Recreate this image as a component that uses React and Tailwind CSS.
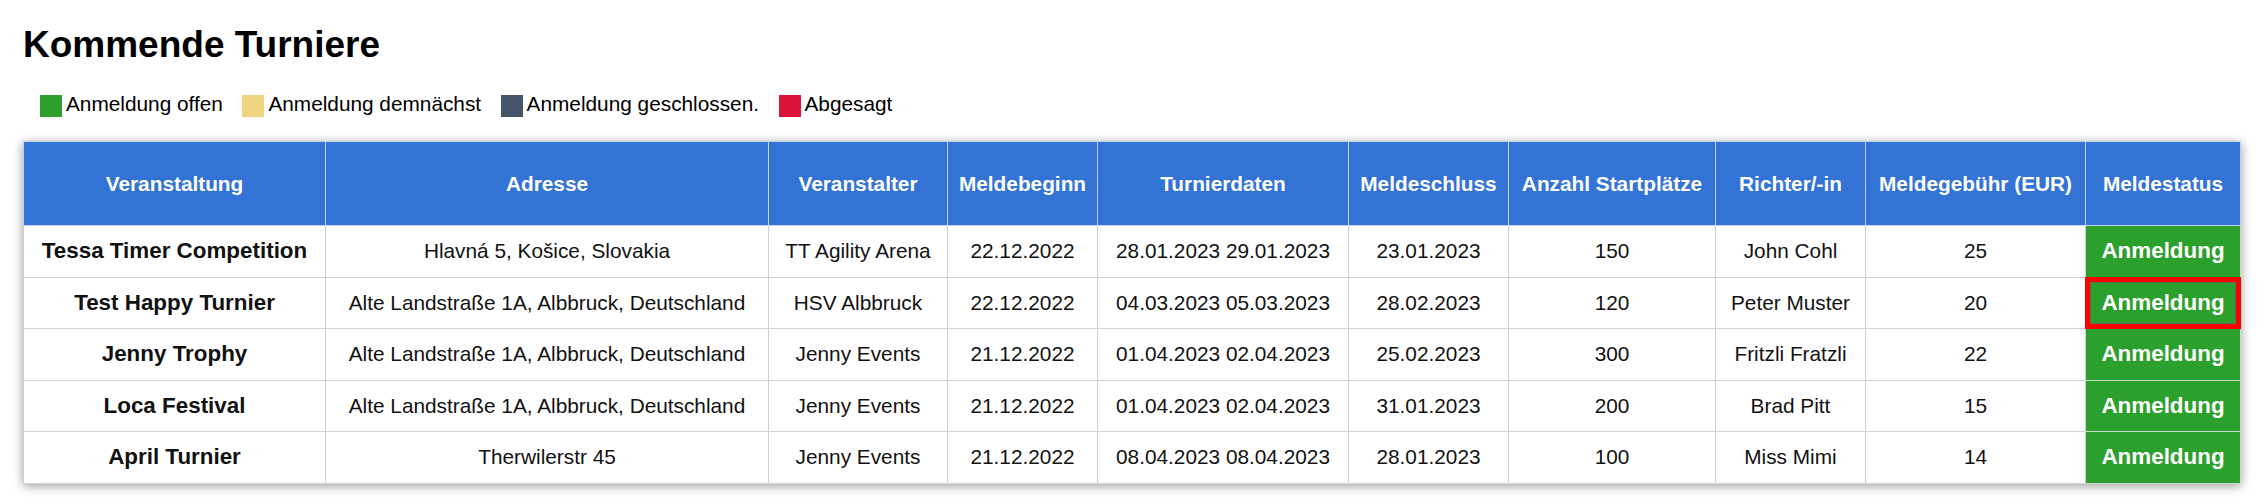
import React from 'react'

const LEGEND = [
  { label: 'Anmeldung offen', color: 'bg-[#2ca02c]' },
  { label: 'Anmeldung demnächst', color: 'bg-[#f0d580]' },
  { label: 'Anmeldung geschlossen.', color: 'bg-[#465469]' },
  { label: 'Abgesagt', color: 'bg-[#dc143c]' },
]

const COLUMNS = [
  { label: 'Veranstaltung', width: 'w-[302px]' },
  { label: 'Adresse', width: 'w-[443px]' },
  { label: 'Veranstalter', width: 'w-[179px]' },
  { label: 'Meldebeginn', width: 'w-[150px]' },
  { label: 'Turnierdaten', width: 'w-[251px]' },
  { label: 'Meldeschluss', width: 'w-[160px]' },
  { label: 'Anzahl Startplätze', width: 'w-[207px]' },
  { label: 'Richter/-in', width: 'w-[150px]' },
  { label: 'Meldegebühr (EUR)', width: 'w-[220px]' },
  { label: 'Meldestatus', width: 'w-[155px]' },
]

const LANDSTRASSE = 'Alte Landstraße 1A, Albbruck, Deutschland'

const TOURNAMENTS = [
  {
    name: 'Tessa Timer Competition',
    address: 'Hlavná 5, Košice, Slovakia',
    organizer: 'TT Agility Arena',
    opens: '22.12.2022',
    dates: '28.01.2023 29.01.2023',
    closes: '23.01.2023',
    slots: 150,
    judge: 'John Cohl',
    fee: 25,
  },
  {
    name: 'Test Happy Turnier',
    address: LANDSTRASSE,
    organizer: 'HSV Albbruck',
    opens: '22.12.2022',
    dates: '04.03.2023 05.03.2023',
    closes: '28.02.2023',
    slots: 120,
    judge: 'Peter Muster',
    fee: 20,
    focused: true,
  },
  {
    name: 'Jenny Trophy',
    address: LANDSTRASSE,
    organizer: 'Jenny Events',
    opens: '21.12.2022',
    dates: '01.04.2023 02.04.2023',
    closes: '25.02.2023',
    slots: 300,
    judge: 'Fritzli Fratzli',
    fee: 22,
  },
  {
    name: 'Loca Festival',
    address: LANDSTRASSE,
    organizer: 'Jenny Events',
    opens: '21.12.2022',
    dates: '01.04.2023 02.04.2023',
    closes: '31.01.2023',
    slots: 200,
    judge: 'Brad Pitt',
    fee: 15,
  },
  {
    name: 'April Turnier',
    address: 'Therwilerstr 45',
    organizer: 'Jenny Events',
    opens: '21.12.2022',
    dates: '08.04.2023 08.04.2023',
    closes: '28.01.2023',
    slots: 100,
    judge: 'Miss Mimi',
    fee: 14,
  },
]

function Cell({ children }) {
  return (
    <td className="h-[51.5px] p-0 border border-[#d0d0d0] text-center text-[20.8px] leading-6 text-[#111]">
      {children}
    </td>
  )
}

export default function App() {
  return (
    <div className="bg-white pl-[23px] pr-[22px] pt-[26px] pb-[19px] font-['Liberation_Sans',Arial,sans-serif] text-black">

      {/* Title */}
      <h1 className="text-[37px] leading-[37px] font-bold">
        Kommende Turniere
      </h1>

      {/* Legend */}
      <div className="mt-[29px] pl-[17px] flex items-start gap-[19.5px] text-[20.8px] leading-6">
        {LEGEND.map((item) => (
          <div key={item.label} className="flex items-start gap-[4px]">
            <span className={`mt-[3px] w-[22px] h-[22px] ${item.color}`} />
            <span>{item.label}</span>
          </div>
        ))}
      </div>

      {/* Table */}
      <table className="mt-[24px] w-full table-fixed border-collapse shadow-[0_2px_10px_rgba(0,0,0,0.4)]">
        <colgroup>
          {COLUMNS.map((c) => (
            <col key={c.label} className={c.width} />
          ))}
        </colgroup>

        <thead>
          <tr className="bg-[#3373d5]">
            {COLUMNS.map((c) => (
              <th
                key={c.label}
                className="h-[84px] p-0 border border-[#c3d3ee] text-white font-bold text-[20.8px] leading-6 text-center whitespace-nowrap"
              >
                {c.label}
              </th>
            ))}
          </tr>
        </thead>

        <tbody>
          {TOURNAMENTS.map((t) => (
            <tr key={t.name}>
              <td className="h-[51.5px] p-0 border border-[#d0d0d0] text-center text-[22.4px] leading-6 font-bold text-[#111]">
                {t.name}
              </td>
              <Cell>{t.address}</Cell>
              <Cell>{t.organizer}</Cell>
              <Cell>{t.opens}</Cell>
              <Cell>{t.dates}</Cell>
              <Cell>{t.closes}</Cell>
              <Cell>{t.slots}</Cell>
              <Cell>{t.judge}</Cell>
              <Cell>{t.fee}</Cell>
              <td className="relative h-[51.5px] p-0 border border-[#c8dcc8] bg-[#2ca02c] text-center text-white text-[22.4px] leading-6 font-bold">
                Anmeldung
                {t.focused && (
                  <span className="absolute -inset-px border-[5px] border-[#ff0000] shadow-[inset_0_0_0_1px_#5c6b5c]" />
                )}
              </td>
            </tr>
          ))}
        </tbody>
      </table>
    </div>
  )
}
